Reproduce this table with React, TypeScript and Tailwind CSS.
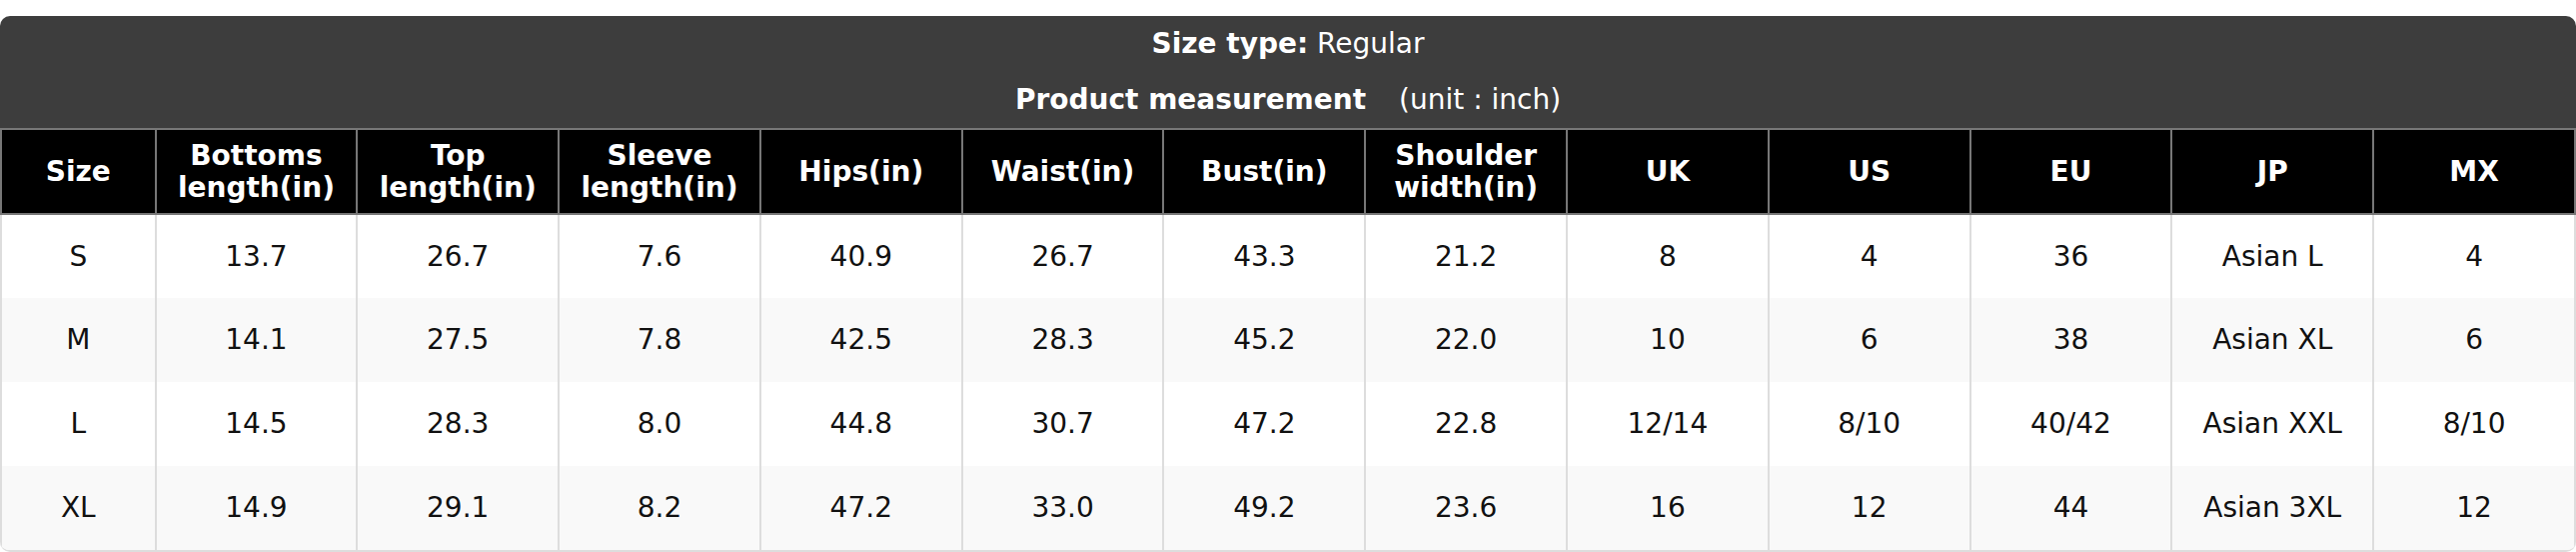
import React from "react";

const headers = [
  ["Size"],
  ["Bottoms", "length(in)"],
  ["Top", "length(in)"],
  ["Sleeve", "length(in)"],
  ["Hips(in)"],
  ["Waist(in)"],
  ["Bust(in)"],
  ["Shoulder", "width(in)"],
  ["UK"],
  ["US"],
  ["EU"],
  ["JP"],
  ["MX"],
];

const rows = [
  ["S", "13.7", "26.7", "7.6", "40.9", "26.7", "43.3", "21.2", "8", "4", "36", "Asian L", "4"],
  ["M", "14.1", "27.5", "7.8", "42.5", "28.3", "45.2", "22.0", "10", "6", "38", "Asian XL", "6"],
  ["L", "14.5", "28.3", "8.0", "44.8", "30.7", "47.2", "22.8", "12/14", "8/10", "40/42", "Asian XXL", "8/10"],
  ["XL", "14.9", "29.1", "8.2", "47.2", "33.0", "49.2", "23.6", "16", "12", "44", "Asian 3XL", "12"],
];

export default function App() {
  return (
    <div className="bg-white pt-4 font-['DejaVu_Sans',sans-serif]">
      <div className="overflow-hidden rounded-[10px] border-b-2 border-[#ddd]">
        <div className="bg-[#3d3d3d] text-white text-[28px]">
          <div className="flex h-[55px] items-center justify-center">
            <span>
              <b>Size type:</b> Regular
            </span>
          </div>
          <div className="flex h-[57px] items-center justify-center">
            <b>Product measurement</b>
            <span className="ml-[33px]">(unit : inch)</span>
          </div>
        </div>

        <table className="w-full table-fixed border-collapse text-[28px]">
          <colgroup>
            <col className="w-[6%]" />
            {headers.slice(1).map((_, i) => (
              <col key={i} />
            ))}
          </colgroup>
          <thead>
            <tr className="h-[85px] bg-black text-white">
              {headers.map((h, i) => (
                <th key={i} className="border-2 border-[#777] px-1 font-bold leading-[32px]">
                  {h.map((line, j) => (
                    <div key={j}>{line}</div>
                  ))}
                </th>
              ))}
            </tr>
          </thead>
          <tbody>
            {rows.map((r, i) => (
              <tr key={i} className={i % 2 === 1 ? "h-[84px] bg-[#f9f9f9]" : "h-[84px] bg-white"}>
                {r.map((c, j) => (
                  <td key={j} className="border-x-2 border-[#ddd] text-center text-[#111]">
                    {c}
                  </td>
                ))}
              </tr>
            ))}
          </tbody>
        </table>
      </div>
    </div>
  );
}
